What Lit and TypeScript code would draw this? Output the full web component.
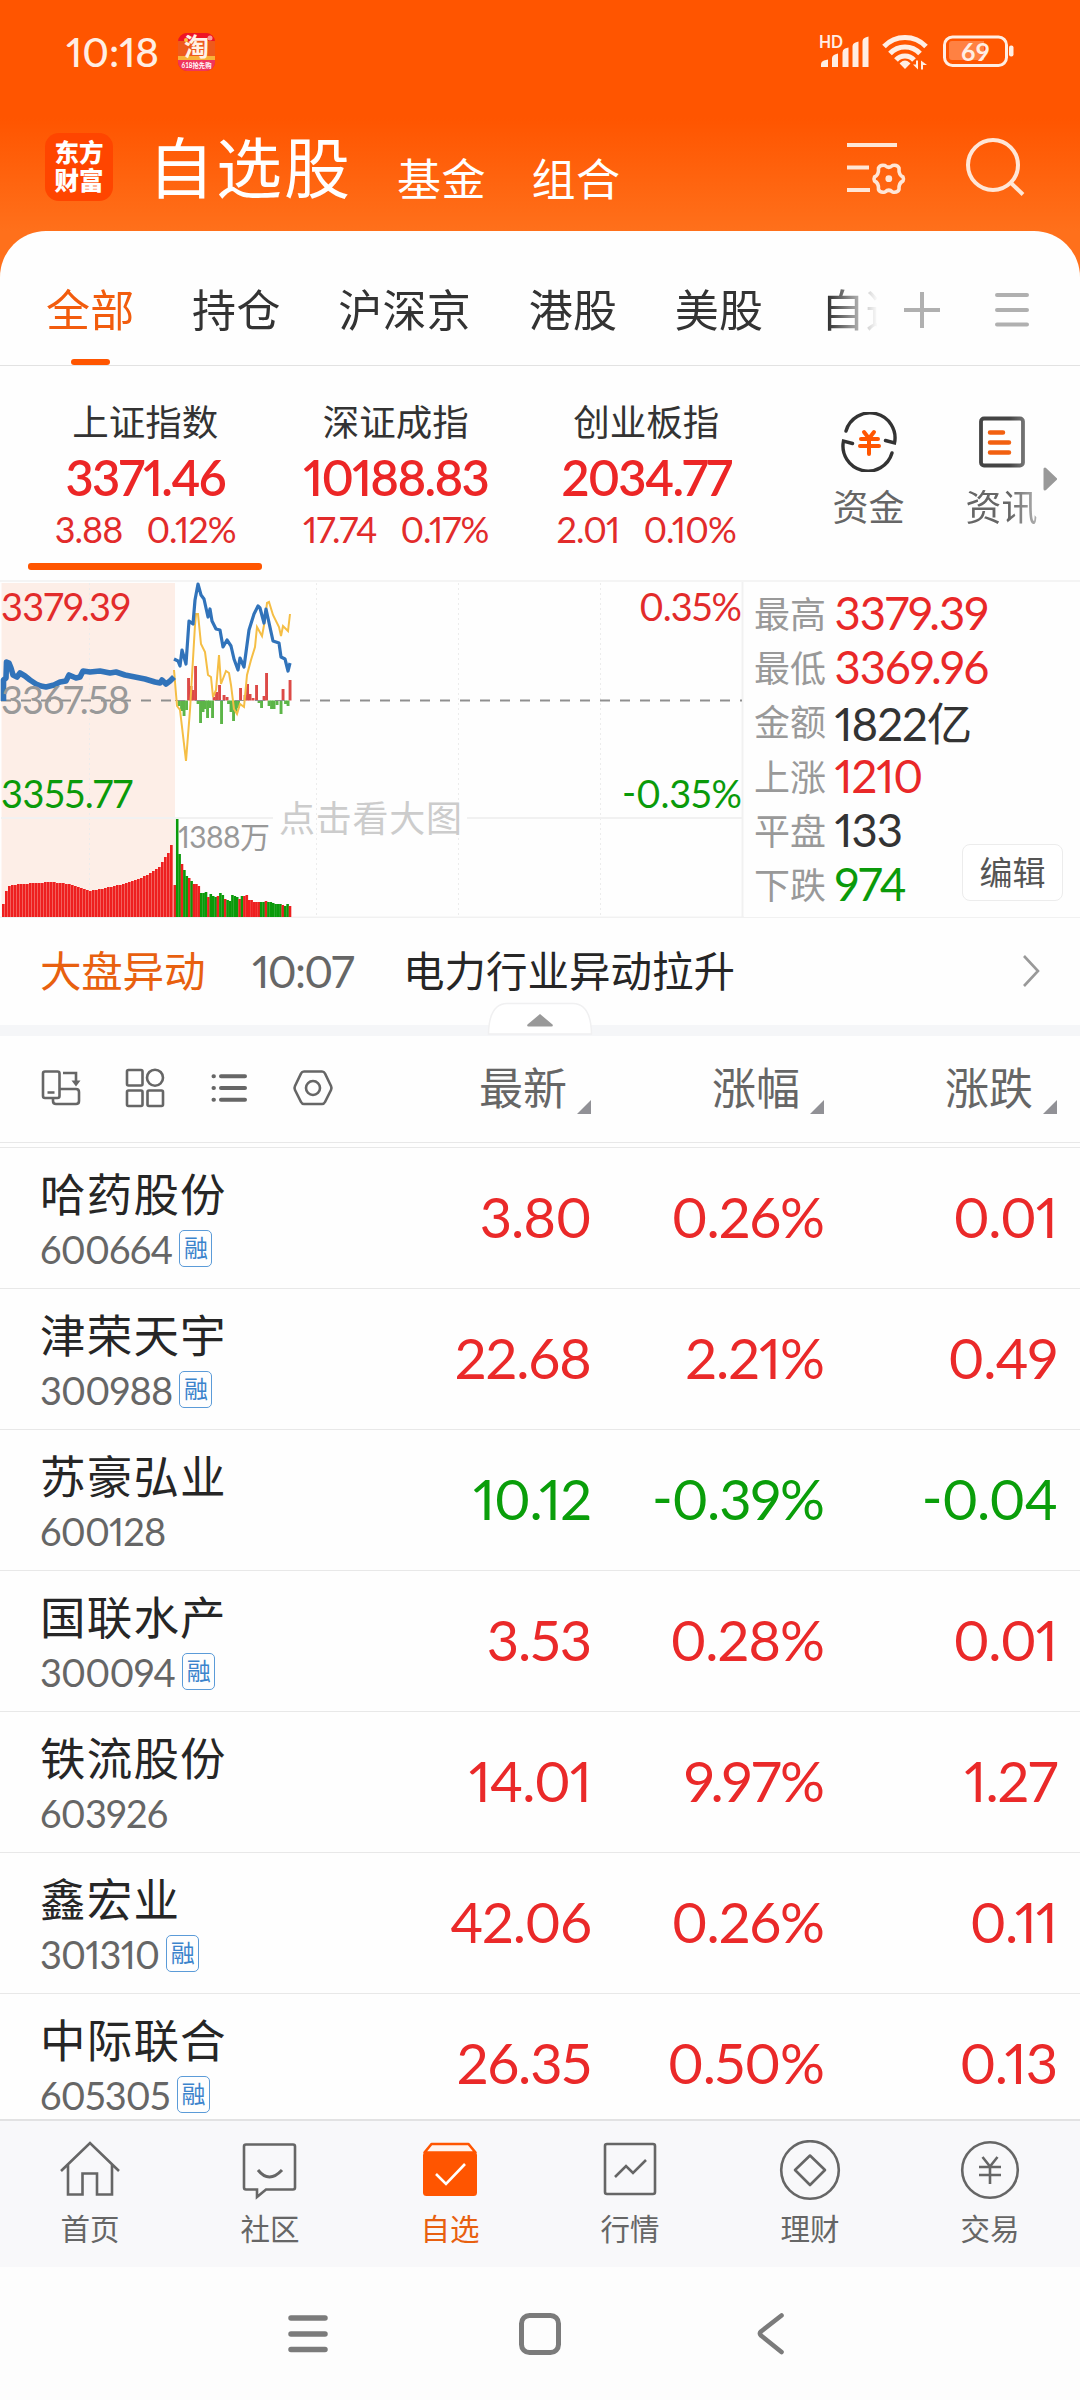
import { LitElement, html, svg, css, nothing } from "lit";
import { customElement } from "lit/decorators.js";
import { classMap } from "lit/directives/class-map.js";

const FONT = css`Lato, "Noto Sans CJK SC", sans-serif`;

type Trend = "up" | "down";

interface Stock {
  name: string;
  code: string;
  margin: boolean;
  price: string;
  pct: string;
  diff: string;
  trend: Trend;
}

const STOCKS: Stock[] = [
  { name: "哈药股份", code: "600664", margin: true, price: "3.80", pct: "0.26%", diff: "0.01", trend: "up" },
  { name: "津荣天宇", code: "300988", margin: true, price: "22.68", pct: "2.21%", diff: "0.49", trend: "up" },
  { name: "苏豪弘业", code: "600128", margin: false, price: "10.12", pct: "-0.39%", diff: "-0.04", trend: "down" },
  { name: "国联水产", code: "300094", margin: true, price: "3.53", pct: "0.28%", diff: "0.01", trend: "up" },
  { name: "铁流股份", code: "603926", margin: false, price: "14.01", pct: "9.97%", diff: "1.27", trend: "up" },
  { name: "鑫宏业", code: "301310", margin: true, price: "42.06", pct: "0.26%", diff: "0.11", trend: "up" },
  { name: "中际联合", code: "605305", margin: true, price: "26.35", pct: "0.50%", diff: "0.13", trend: "up" },
];

const INDEXES = [
  { name: "上证指数", value: "3371.46", diff: "3.88", pct: "0.12%", active: true },
  { name: "深证成指", value: "10188.83", diff: "17.74", pct: "0.17%", active: false },
  { name: "创业板指", value: "2034.77", diff: "2.01", pct: "0.10%", active: false },
];

const STATS = [
  { label: "最高", value: "3379.39", tone: "up" },
  { label: "最低", value: "3369.96", tone: "up" },
  { label: "金额", value: "1822亿", tone: "flat" },
  { label: "上涨", value: "1210", tone: "up" },
  { label: "平盘", value: "133", tone: "flat" },
  { label: "下跌", value: "974", tone: "down" },
];

/* ---------- status bar ---------- */
@customElement("status-bar")
class StatusBar extends LitElement {
  static styles = css`
    :host { display: flex; align-items: center; height: 104px; padding: 0 64px 0 66px; color: #ffeee4; }
    .time { font: 500 40.500px/48px ${FONT}; letter-spacing: 0; font-variant-numeric: proportional-nums; width: 112px; white-space: nowrap; }
    .icons { margin-left: auto; }
    .app, .icons { display: block; font-family: ${FONT}; overflow: visible; }
  `;
  render() {
    return html`
      <span class="time">10:18</span>
      <svg class="app" width="38" height="38" viewBox="0 0 38 38">
        <defs><clipPath id="r"><rect width="37" height="38" rx="9" /></clipPath></defs>
        <g clip-path="url(#r)">
          <rect width="38" height="38" fill="#f2240f" />
          <rect y="6" width="38" height="20" fill="#ee5a1c" />
          <rect width="38" height="8" fill="#ef1424" />
          <rect y="23" width="38" height="5" fill="#f8b13a" />
          <rect y="27" width="38" height="11" fill="#f0355c" />
        </g>
        <circle cx="8" cy="7" r="2" fill="#f8c040" />
        <circle cx="32" cy="5" r="2.5" fill="#f79a9a" />
        <text x="6" y="23" font-size="25" font-weight="700" fill="#fff3e8">淘</text>
        <text x="3.500" y="35" font-size="7" font-weight="700" fill="#fff" textLength="30" lengthAdjust="spacingAndGlyphs">618抢先购</text>
      </svg>
      <svg class="icons" width="198" height="38" viewBox="819 33.500 198 38" fill="#ffeee4">
        <text x="820" y="48.500" font-size="16.500" font-weight="700" textLength="24" lengthAdjust="spacingAndGlyphs">HD</text>
        <path d="M822 67.500V65q0-3 3-4l4-1v7.500z" />
        <path d="M833 67.500V59q0-3 3-4l3-1v13.500z M843.500 67.500V53q0-3 2.500-4l3.500-1v19.500z M853.500 67.500V47q0-3 3-4l3-1v25.500z M863.500 67.500V42q0-3 3-4l3-1v30.500z" />
        <g fill="none" stroke="#ffeee4" stroke-width="5">
          <path d="M885 47a29 29 0 0 1 42 0" />
          <path d="M891 54a20.500 20.500 0 0 1 30 0" />
          <path d="M897 60.500a12 12 0 0 1 18 0" />
        </g>
        <path d="M906 68l-4-4q4-4 8 0z" stroke="#ffeee4" stroke-width="2" />
        <path d="M919 61v9l-5-5h3v-4z M922 70v-9l6 4.500h-4v4.500z" />
        <rect x="945.500" y="37.500" width="62" height="28.500" rx="8" fill="none" stroke="#ffeee4" stroke-width="3" />
        <path d="M953 41.500h32v19h-32q-3 0-3-3v-13q0-3 3-3z" fill="#ff8142" />
        <rect x="1010" y="46" width="4.500" height="11" rx="2" />
        <text x="962" y="61" font-size="25" font-weight="700" textLength="29">69</text>
      </svg>
    `;
  }
}

/* ---------- title row ---------- */
@customElement("title-row")
class TitleRow extends LitElement {
  static styles = css`
    :host { display: flex; height: 127px; padding: 0 54px 0 45px; color: #fff; font-family: ${FONT}; }
    .logo { box-sizing: border-box; width: 68px; height: 68px; margin-top: 29px; padding: 6px 0 0 9.500px; border-radius: 14px; background: #ff4500; font-size: 24.500px; font-weight: 900; line-height: 28px; white-space: nowrap; }
    .titles { display: flex; align-items: flex-start; margin: 14px 0 0 35px; white-space: nowrap; }
    .main { font-size: 66px; line-height: 100px; letter-spacing: 2px; width: 249px; }
    .sub { margin-top: 31px; font-size: 44px; line-height: 60px; width: 134.500px; letter-spacing: 0.500px; }
    .tools { margin: 34px 0 0 auto; }
  `;
  render() {
    return html`
      <div class="logo">东方<br />财富</div>
      <div class="titles">
        <span class="main">自选股</span>
        <span class="sub">基金</span>
        <span class="sub">组合</span>
      </div>
      <svg class="tools" width="180" height="60" viewBox="845.500 138 180 60" fill="none" stroke="#ffe6d6" stroke-width="4">
        <path d="M846.500 145h50M846.500 167.500h22M846.500 190h23" />
        <path
          d="M884.500 165.500Q888.300 169 892 165.500Q897 164.500 898.500 168Q898 175 902.500 177Q903.500 179 902.500 181Q898 183 898.500 189.500Q897 193 892 192Q888.300 188.500 884.500 192Q879.500 193 878 189.500Q878.500 183 874 181Q873 179 874 177Q878.500 175 878 168Q879.500 164.500 884.500 165.500z"
          stroke-width="3.600" stroke-linejoin="round" />
        <circle cx="888.300" cy="178.700" r="3.400" fill="#ffe6d6" stroke="none" />
        <circle cx="992.500" cy="165" r="25" />
        <path d="M1010 182.500l12.500 12" />
      </svg>
    `;
  }
}

/* ---------- category tabs ---------- */
@customElement("group-tabs")
class GroupTabs extends LitElement {
  static styles = css`
    :host { display: flex; align-items: stretch; height: 135px; box-sizing: border-box; border-bottom: 1px solid #e2e2e2; font: 44px/60px ${FONT}; color: #333; }
    .strip { display: flex; gap: 57.500px; width: 831px; padding: 49px 0 0 46px; overflow: hidden; white-space: nowrap; -webkit-mask-image: linear-gradient(90deg, #000 828px, transparent 878px); mask-image: linear-gradient(90deg, #000 828px, transparent 878px); }
    .tab { flex: none; display: flex; flex-direction: column; align-items: center; justify-content: space-between; letter-spacing: 0.300px; }
    .active { color: #f25c0d; }
    .mark { width: 39px; height: 6px; border-radius: 3px; background: #ff5500; }
    .tools { margin: 57px 0 0 26px; flex: none; }
  `;
  render() {
    const tabs = ["全部", "持仓", "沪深京", "港股", "美股", "自选"];
    return html`
      <div class="strip">
        ${tabs.map(
          (t, i) => html`<div class=${classMap({ tab: true, active: i === 0 })}>
            ${t}${i === 0 ? html`<i class="mark"></i>` : nothing}
          </div>`
        )}
      </div>
      <svg class="tools" width="128" height="44" viewBox="903 288 128 44" fill="none" stroke="#b0b0b0" stroke-width="4">
        <path d="M904 310h36M922 292v36" />
        <path d="M997 295h30M997 310h30M997 324.500h30" stroke-linecap="round" />
      </svg>
    `;
  }
}

/* ---------- index summary cards ---------- */
@customElement("index-strip")
class IndexStrip extends LitElement {
  static styles = css`
    :host { display: flex; height: 214px; padding-left: 20px; font-family: ${FONT}; font-variant-numeric: proportional-nums; }
    .card { width: 250.500px; display: flex; flex-direction: column; align-items: center; white-space: nowrap; }
    .name { margin-top: 33px; font-size: 36.500px; line-height: 46px; color: #333; }
    .value { margin-top: 6px; font-size: 49px; line-height: 52px; font-weight: 600; color: #ec2626; letter-spacing: -1.700px; }
    .sub { display: flex; gap: 24px; margin-top: 4px; font-size: 36px; line-height: 44px; color: #e22b2b; letter-spacing: -0.900px; }
    .bar { width: 234px; height: 7px; margin-top: 12px; border-radius: 3px; background: #ff5500; }
    .tools { display: flex; gap: 61px; margin-left: 61px; }
    .tool { display: flex; flex-direction: column; align-items: center; font-size: 36px; line-height: 46px; color: #666; margin-top: 46px; white-space: nowrap; }
    .tool svg { margin-bottom: 12px; }
    .fade { -webkit-mask-image: linear-gradient(90deg, #000 60%, rgba(0, 0, 0, 0.5)); mask-image: linear-gradient(90deg, #000 60%, rgba(0, 0, 0, 0.5)); }
    .more { margin: 101px 0 0 5px; flex: none; }
  `;
  render() {
    return html`
      ${INDEXES.map(
        (x) => html`<div class="card">
          <span class="name">${x.name}</span>
          <span class="value">${x.value}</span>
          <span class="sub"><span>${x.diff}</span><span>${x.pct}</span></span>
          ${x.active ? html`<i class="bar"></i>` : nothing}
        </div>`
      )}
      <div class="tools">
        <div class="tool">
          <svg width="60" height="60" viewBox="839 412 60 60" fill="none" stroke="#333" stroke-width="3.400" stroke-linecap="round">
            <path d="M846 431a25 25 0 0 1 48.500 12l-9-2.500" />
            <path d="M892 453a25 25 0 0 1-48.500-12l9 2.500" />
            <path d="M864 432l5 6.500 5-6.500M861 439h17M860 446h19M869 439v15" stroke="#ff5500" stroke-width="4" />
          </svg>
          资金
        </div>
        <div class="tool fade">
          <svg width="60" height="60" viewBox="972 412 60 60" fill="none" stroke="#444" stroke-width="3.800">
            <rect x="981" y="418.500" width="42" height="47" rx="3" />
            <path d="M990 432.500h13M990 442.500h19M990 452.500h19" stroke="#f26010" stroke-width="4.500" stroke-linecap="round" />
          </svg>
          资讯
        </div>
      </div>
      <svg class="more" width="14" height="24" viewBox="0 0 14 24">
        <path d="M2 2v20l10.500-10z" fill="#999" stroke="#999" stroke-width="3" stroke-linejoin="round" />
      </svg>
    `;
  }
}

/* ---------- intraday chart ---------- */
const BASE = 700.5;
const FLOOR = 917;

const PRE_LINE =
  "3.5,701 3.5,680 6,678 6.500,662 9,663 11,668 13,675 17,677 20,673 25,676 30,680 36,684 41,686 46,687 54,685 60,682 66,681 69,675 76,678 80,677 83,671 90,672 100,671 110,673 116,672 125,675 135,677 145,679 155,682 160,683 162,680 166,684 170,681 174,677";
const PRICE_LINE =
  "174,659 178,661 180,666 182,650 186,664 189,621 193,624 195,600 198,584 201,595 204,599 208,617 210,609 212,621 216,629 220,630 223,647 227,640 231,646 234,659 238,670 240,658 244,667 249,630 254,614 258,606 260,608 264,623 266,609 273,641 279,643 281,657 285,659 288,671 290,663";
const AVG_LINE =
  "174,670 177,706 180,710 186,761 190,710 195,625 196,614 198,614 201,644 205,652 208,675 211,677 213,697 216,690 219,655 221,684 226,671 229,673 231,685 234,709 237,714 240,704 244,707 247,675 251,660 255,647 257,627 262,636 265,620 267,603 269,602 273,615 279,627 281,636 283,626 288,631 290,614";

const STRENGTH: [number, number][] = [
  [188.5, 678], [191, 686], [193, 690], [195.5, 666], [214, 697], [216.5, 692], [219.5, 685], [224, 695], [227, 697],
  [240.5, 688], [245, 695], [247.5, 684], [250, 694], [253, 698], [256.5, 685], [264, 696], [266.5, 673], [283, 689], [290, 680],
  [179, 706], [181.5, 711], [184, 716], [186.5, 710], [200.5, 723], [198, 704], [203, 712], [205, 709], [207.5, 718], [212.5, 718],
  [209.5, 708], [221.5, 724], [228.5, 704], [231, 712], [233.5, 721], [236, 712], [238.5, 708], [259, 703], [261.5, 708], [269, 706],
  [271.5, 709], [274, 709], [277, 705], [281, 714], [285.5, 704], [288, 706],
];

/* anchors of the pre-open volume envelope: [x, top] */
const PRE_VOL: [number, number][] = [
  [3, 904], [6, 891], [8.5, 886], [20, 884], [50, 882], [70, 884], [90, 891], [110, 887], [130, 882], [145, 876],
  [155, 870], [160, 866], [164, 858], [168, 853], [172, 842],
];

const VOL: [number, string][] = [
  [885, "r"], [819, "g"], [854, "g"], [864, "r"], [870, "g"], [876, "g"], [878, "r"], [881, "g"], [884, "r"], [884, "r"], [886, "r"],
  [893, "g"], [893, "g"], [892, "g"], [897, "r"], [894, "g"], [896, "g"], [897, "g"], [896, "r"], [893, "g"], [895, "g"], [899, "r"],
  [900, "g"], [901, "g"], [895, "g"], [896, "g"], [897, "g"], [899, "r"], [896, "g"], [896, "r"], [895, "r"], [900, "r"], [900, "r"],
  [902, "r"], [902, "r"], [902, "r"], [902, "g"], [902, "g"], [901, "r"], [902, "g"], [902, "g"], [903, "g"], [904, "g"], [904, "g"],
  [904, "g"], [905, "r"], [906, "g"], [904, "g"], [906, "r"],
];

function envelope(x: number): number {
  for (let i = 1; i < PRE_VOL.length; i++) {
    const [x0, y0] = PRE_VOL[i - 1];
    const [x1, y1] = PRE_VOL[i];
    if (x <= x1) return Math.round(y0 + ((y1 - y0) * (x - x0)) / (x1 - x0));
  }
  return PRE_VOL[PRE_VOL.length - 1][1];
}

@customElement("intraday-chart")
class IntradayChart extends LitElement {
  static styles = css`
    :host { display: block; width: 744px; height: 336px; }
    svg { display: block; font-family: ${FONT}; font-feature-settings: "case"; }
    .grid { stroke: #ececec; stroke-width: 1; stroke-dasharray: 2 3; }
    .edge { stroke: #f1f1f1; stroke-width: 2; }
    .num { font-size: 38px; }
    .soft { fill: #f2605c; }
    .r { fill: #ee1f1f; }
    .g { fill: #0a9a0a; }
  `;
  render() {
    const pre: number[] = [];
    for (let x = 2; x < 172; x += 3) pre.push(x);
    return html`<svg width="744" height="336" viewBox="0 582 744 336">
      <rect x="1.500" y="583" width="173.500" height="334" fill="#fdeee7" />
      <path class="grid" d="M89.500 583V917M316.500 583V917M458.500 583V917M600.500 583V917" />
      <path class="edge" d="M0 917.500H744M742.500 582V919M1 818H273M467 818H742" />
      ${pre.map((x) => {
        const top = envelope(x + 1);
        return svg`<rect class="soft" x=${x} y=${top} width="3" height=${FLOOR - top} /><rect class="r" x=${x} y=${top} width="2" height=${FLOOR - top} />`;
      })}
      ${VOL.map(
        ([top, c], i) => svg`<rect class=${c} x=${173.5 + i * 2.4} y=${top} width="2.6" height=${FLOOR - top} />`
      )}
      ${STRENGTH.map(([x, y]) =>
        y < BASE
          ? svg`<rect x=${x - 1.4} y=${y} width="2.9" height=${BASE - y} fill="#dc4a47" />`
          : svg`<rect x=${x - 1.4} y=${BASE} width="2.9" height=${y - BASE} fill="#5cb548" />`
      )}
      <path d="M1 700.500H175M300 700.500H742" stroke="#8f8f8f" stroke-width="2.200" stroke-dasharray="10 10" />
      <path d="M175 700.500H292" stroke="#8f8f8f" stroke-width="1" stroke-dasharray="10 10" />
      <polyline points=${AVG_LINE} fill="none" stroke="#f5be45" stroke-width="2" />
      <polyline points=${PRICE_LINE} fill="none" stroke="#3173ba" stroke-width="3.200" stroke-linejoin="round" />
      <polyline points=${PRE_LINE} fill="none" stroke="#3173ba" stroke-width="5.600" stroke-linejoin="round" />
      <text class="num" x="1" y="621" textLength="130" fill="#e22b2b">3379.39</text>
      <text class="num" x="1" y="714" textLength="129" fill="#999">3367.58</text>
      <text class="num" x="1" y="808" textLength="132" fill="#0a9a0a">3355.77</text>
      <text class="num" x="639" y="621" textLength="103" fill="#e22b2b">0.35%</text>
      <text class="num" x="622" y="808" textLength="120" fill="#0a9a0a">-0.35%</text>
      <text x="178" y="848" font-size="30" textLength="92" fill="#999">1388万</text>
      <text x="279" y="832" font-size="36" textLength="183" fill="#ccc">点击看大图</text>
    </svg>`;
  }
}

/* ---------- chart + market stats ---------- */
@customElement("market-panel")
class MarketPanel extends LitElement {
  static styles = css`
    :host { display: flex; position: relative; height: 338px; border-top: 2px solid #f4f4f4; border-bottom: 1px solid #f1f1f1; box-sizing: border-box; font-family: ${FONT}; font-variant-numeric: proportional-nums; }
    .stats { display: flex; flex-direction: column; margin: 4px 0 0 10px; }
    .stat { display: flex; align-items: center; height: 54.200px; white-space: nowrap; }
    .label { width: 80.500px; font-size: 36px; color: #999; margin-top: -2px; }
    .value { font-size: 45.500px; letter-spacing: -1px; margin-top: -1px; }
    .up { color: #e92828; }
    .down { color: #0a9a0a; }
    .flat { color: #333; }
    .edit { position: absolute; right: 17px; bottom: 16px; box-sizing: border-box; width: 101px; height: 57px; border: 1.500px solid #ececec; border-radius: 8px; background: #fff; color: #555; font-size: 33px; line-height: 54px; text-align: center; }
  `;
  render() {
    return html`
      <intraday-chart></intraday-chart>
      <div class="stats">
        ${STATS.map(
          (s) => html`<div class="stat"><span class="label">${s.label}</span><span class="value ${s.tone}">${s.value}</span></div>`
        )}
      </div>
      <div class="edit">编辑</div>
    `;
  }
}

/* ---------- market news line ---------- */
@customElement("news-line")
class NewsLine extends LitElement {
  static styles = css`
    :host { display: flex; align-items: center; position: relative; height: 118px; box-sizing: border-box; padding: 0 39px 2px 40px; border-bottom: 11px solid #f5f6f8; font: 41.500px/56px ${FONT}; white-space: nowrap; }
    .kind { width: 212px; color: #e8600f; letter-spacing: -0.200px; }
    .time { width: 151px; color: #666; font-size: 44px; letter-spacing: -1.700px; font-variant-numeric: proportional-nums; }
    .text { color: #262626; }
    .go { margin-left: auto; }
    .handle { position: absolute; left: 487px; bottom: -10px; }
  `;
  render() {
    return html`
      <span class="kind">大盘异动</span>
      <span class="time">10:07</span>
      <span class="text">电力行业异动拉升</span>
      <svg class="go" width="20" height="34" viewBox="0 0 20 34" fill="none" stroke="#999" stroke-width="2.600">
        <path d="M3 2l14 15L3 32" />
      </svg>
      <svg class="handle" width="106" height="33" viewBox="0 0 106 33">
        <path d="M1.500 32Q2 2 20 1.500H86Q104 2 104.500 32z" fill="#fff" stroke="#f0f0f1" stroke-width="1.500" />
        <path d="M53 12l12.500 10.500q1 2-1 2h-23q-2 0-1-2z" fill="#999" />
      </svg>
    `;
  }
}

/* ---------- table ---------- */
@customElement("stock-table")
class StockTable extends LitElement {
  static styles = css`
    :host { display: block; height: 1083px; overflow: hidden; font-family: ${FONT}; font-variant-numeric: proportional-nums; }
    .head, .row { display: grid; grid-template-columns: 318px 233px 233px 233px; padding-left: 40px; align-items: center; }
    .head { height: 107px; box-sizing: border-box; border-bottom: 1px solid #e8e8e8; margin-bottom: 4px; font-size: 44px; line-height: 60px; color: #666; }
    .col { display: flex; justify-content: flex-end; align-items: flex-end; gap: 10px; white-space: nowrap; margin-top: -3px; }
    .col svg { margin-bottom: 4px; }
    .icons { display: block; margin: 0 0 0 -2px; }
    .row { height: 141px; box-sizing: border-box; border-top: 1px solid #e8e8e8; }
    .id { display: flex; flex-direction: column; margin-top: 3px; }
    .name { font-size: 45.500px; line-height: 58px; letter-spacing: 1.200px; color: #262626; }
    .meta { display: flex; align-items: center; height: 50px; gap: 7px; }
    .code { font-size: 38px; line-height: 50px; color: #666; letter-spacing: -0.800px; }
    .tag { box-sizing: border-box; width: 33px; height: 37px; border: 1.500px solid #5b9bd8; border-radius: 5px; color: #3c84cc; font-size: 24px; line-height: 34px; text-align: center; }
    .num { text-align: right; font-size: 56px; line-height: 70px; letter-spacing: -1px; margin-top: -2px; white-space: nowrap; font-feature-settings: "case"; }
    .up { color: #ea2929; }
    .down { color: #0a9e0a; }
  `;
  render() {
    return html`
      <div class="head">
        <svg class="icons" width="300" height="44" viewBox="38 1068 300 44" fill="none" stroke="#666" stroke-width="2.600">
          <rect x="43" y="1072.500" width="16.500" height="26.500" rx="2" />
          <path d="M47.500 1093.500h7M63 1074h13v10M53 1100v2q0 3 3 3h20q3 0 3-3v-9q0-3-3-3H60" />
          <path d="M71.500 1081.500h9l-4.500 6z" fill="#666" stroke="none" />
          <rect x="127" y="1071" width="15.500" height="15.500" rx="1.500" />
          <circle cx="155" cy="1078.700" r="8" />
          <rect x="127" y="1091.500" width="15.500" height="15.500" rx="1.500" />
          <rect x="147.500" y="1091.500" width="15.500" height="15.500" rx="1.500" />
          <path d="M221 1077.300h24M221 1089h24M221 1100.700h24M213.500 1077.300h.4M213.500 1089h.4M213.500 1100.700h.4" stroke-width="4" stroke-linecap="round" />
          <path d="M304 1072.500h18q2 0 3 2l6 12.500q1 2 0 4l-6 12q-1 2-3 2h-18q-2 0-3-2l-6-12q-1-2 0-4l6-12.500q1-2 3-2z" />
          <circle cx="313" cy="1089" r="7" />
        </svg>
        ${["最新", "涨幅", "涨跌"].map(
          (c) => html`<div class="col">${c}<svg width="14" height="14"><path d="M14 0v14H0z" fill="#919196" /></svg></div>`
        )}
      </div>
      ${STOCKS.map(
        (s) => html`<div class="row">
          <div class="id">
            <span class="name">${s.name}</span>
            <span class="meta"><span class="code">${s.code}</span>${s.margin ? html`<span class="tag">融</span>` : nothing}</span>
          </div>
          <span class="num ${s.trend}">${s.price}</span>
          <span class="num ${s.trend}">${s.pct}</span>
          <span class="num ${s.trend}">${s.diff}</span>
        </div>`
      )}
    `;
  }
}

/* ---------- bottom navigation ---------- */
const NAV = [
  { label: "首页", icon: svg`<path d="M2 31L31 3l29 28M9 25v29.500h14.500V33.500H38V54.500h15V25" />` },
  { label: "社区", icon: svg`<path d="M7 4.500h47q2 0 2 2v41q0 2-2 2H27L18 57v-7.500H7q-2 0-2-2v-41q0-2 2-2z" /><path d="M19 30q11 14 24 0" stroke-width="3" />` },
  {
    label: "自选",
    icon: svg`<path d="M12.500 4h37l7 8.500H5.500z" stroke="#ff5500" fill="#fff4ee" stroke-linejoin="round" /><rect x="4" y="12" width="54" height="44" rx="3.500" fill="#ff5500" stroke="none" /><path d="M17 34l10 10 19-20" stroke="#fff" stroke-width="2.600" />`,
    active: true,
  },
  { label: "行情", icon: svg`<rect x="6" y="4" width="50" height="50" rx="2" /><path d="M16 37l11-11 7 7 13-13" />` },
  { label: "理财", icon: svg`<circle cx="31" cy="30" r="28.800" /><path d="M31 15.500L46 30 31 45 16 30z" stroke-linejoin="round" />` },
  { label: "交易", icon: svg`<circle cx="31" cy="30" r="27.800" /><path d="M23.500 17l7.500 9.500 7.500-9.500M20 27h22M20 35h22M31 27v17" stroke-width="2.600" />` },
];

@customElement("bottom-nav")
class BottomNav extends LitElement {
  static styles = css`
    :host { display: grid; grid-template-columns: repeat(6, 180px); height: 148px; box-sizing: border-box; border-top: 2px solid #e2e2e3; background: #f8f8fa; font: 29.500px/40px ${FONT}; color: #666; }
    .item { display: flex; flex-direction: column; align-items: center; padding-top: 19px; }
    .item svg { fill: none; stroke: #666; stroke-width: 2.600; margin-bottom: 7px; }
    .active { color: #e8600f; }
  `;
  render() {
    return NAV.map(
      (n) => html`<div class=${classMap({ item: true, active: !!n.active })}>
        <svg width="62" height="62" viewBox="0 0 62 62">${n.icon}</svg>${n.label}
      </div>`
    );
  }
}

@customElement("system-nav")
class SystemNav extends LitElement {
  static styles = css`
    :host { display: grid; grid-template-columns: repeat(3, 232px); justify-content: center; align-items: center; justify-items: center; height: 133px; background: #fdfdfd; }
    svg { fill: none; stroke: #7b7b7b; stroke-linecap: round; stroke-linejoin: round; }
  `;
  render() {
    return html`
      <svg width="44" height="44"><path d="M5 6h34M5 22h34M5 37.500h34" stroke-width="5.500" /></svg>
      <svg width="44" height="44"><rect x="3.500" y="3.500" width="37" height="37" rx="8" stroke-width="5" /></svg>
      <svg width="44" height="44"><path d="M31.500 3.500L11 19.500q-2 2 0 4L31.500 40" stroke-width="4.600" /></svg>
    `;
  }
}

@customElement("app-root")
class AppRoot extends LitElement {
  static styles = css`
    :host { display: flex; flex-direction: column; width: 1080px; height: 2400px; overflow: hidden; background: linear-gradient(#ff5500 0, #ff5500 118px, #ff701b 231px, #ff701b 300px); }
    .sheet { display: flex; flex-direction: column; background: #fefefe; border-radius: 46px 46px 0 0; height: 2169px; }
  `;
  render() {
    return html`
      <status-bar></status-bar>
      <title-row></title-row>
      <div class="sheet">
        <group-tabs></group-tabs>
        <index-strip></index-strip>
        <market-panel></market-panel>
        <news-line></news-line>
        <stock-table></stock-table>
        <bottom-nav></bottom-nav>
        <system-nav></system-nav>
      </div>
    `;
  }
}
